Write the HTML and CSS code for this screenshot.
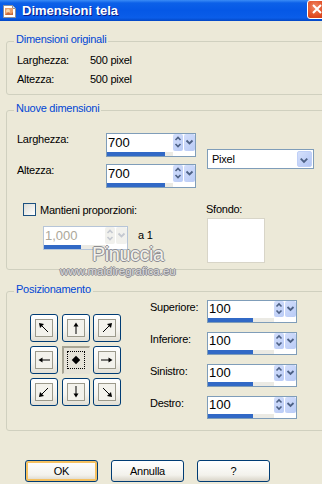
FILE: index.html
```html
<!DOCTYPE html>
<html lang="it">
<head>
    <meta charset="UTF-8">
    <meta name="viewport" content="width=device-width, initial-scale=1.0">
    <title>Dimensioni tela</title>

    <link rel="stylesheet" href="styles.css">
</head>
<body>

<div class="window">
    <!-- Title bar -->
    <div class="titlebar">
        <svg class="app-icon" width="16" height="16" viewBox="0 0 16 16">
            <path d="M1.5 2.5h9l3 3v9h-12z" fill="#fff" stroke="#8a8f9c"/>
            <path d="M10.5 2.5v3h3" fill="#dfe3ea" stroke="#8a8f9c"/>
            <rect x="3" y="5" width="8" height="7" fill="#e9a06a"/>
            <circle cx="6" cy="8" r="2" fill="#f7d7b0"/>
            <path d="M3 12l3-3 3 2 2-2v3z" fill="#c86a3c"/>
        </svg>
        <span class="title">Dimensioni tela</span>
        <div class="close-btn">
            <svg width="21" height="19" viewBox="0 0 21 19">
                <path d="M6 5l8 8M14 5l-8 8" stroke="#fff" stroke-width="2"/>
            </svg>
        </div>
    </div>

    <!-- Original size -->
    <fieldset class="group group-orig">
        <legend>Dimensioni originali</legend>
        <div class="info-row"><span class="info-label">Larghezza:</span><span>500 pixel</span></div>
        <div class="info-row"><span class="info-label">Altezza:</span><span>500 pixel</span></div>
    </fieldset>

    <!-- New size -->
    <fieldset class="group group-new">
        <legend>Nuove dimensioni</legend>
        <div class="size-block">
            <div class="size-fields">
                <div class="field-row">
                    <label class="size-label">Larghezza:</label>
                    <div class="spin">
                        <div class="spin-main">
                            <span class="spin-value">700</span>
                            <span class="spin-updown"><svg width="10" height="16" viewBox="0 0 10 16"><path d="M2.5 6l2.5-2.5 2.5 2.5M2.5 10l2.5 2.5 2.5-2.5" fill="none" stroke="#4d6185" stroke-width="1.6"/></svg></span>
                            <span class="spin-drop"><svg width="11" height="16" viewBox="0 0 11 16"><path d="M2.5 6.5l3 3 3-3" fill="none" stroke="#4d6185" stroke-width="1.8"/></svg></span>
                        </div>
                        <div class="spin-track"><div class="spin-fill" style="width: 88%"></div></div>
                    </div>
                </div>
                <div class="field-row">
                    <label class="size-label">Altezza:</label>
                    <div class="spin">
                        <div class="spin-main">
                            <span class="spin-value">700</span>
                            <span class="spin-updown"><svg width="10" height="16" viewBox="0 0 10 16"><path d="M2.5 6l2.5-2.5 2.5 2.5M2.5 10l2.5 2.5 2.5-2.5" fill="none" stroke="#4d6185" stroke-width="1.6"/></svg></span>
                            <span class="spin-drop"><svg width="11" height="16" viewBox="0 0 11 16"><path d="M2.5 6.5l3 3 3-3" fill="none" stroke="#4d6185" stroke-width="1.8"/></svg></span>
                        </div>
                        <div class="spin-track"><div class="spin-fill" style="width: 88%"></div></div>
                    </div>
                </div>
            </div>
            <div class="combo">
                <span class="combo-text">Pixel</span>
                <span class="combo-drop"><svg width="15" height="16" viewBox="0 0 15 16"><path d="M4 6.5l3.5 3.5 3.5-3.5" fill="none" stroke="#4d6185" stroke-width="2"/></svg></span>
            </div>
        </div>

        <div class="keep-block">
            <div class="keep-left">
                <label class="check-row"><span class="checkbox"></span>Mantieni proporzioni:</label>
                <div class="ratio-row">
                    <div class="spin spin-off">
                        <div class="spin-main">
                            <span class="spin-value">1,000</span>
                            <span class="spin-updown"><svg width="10" height="16" viewBox="0 0 10 16"><path d="M2.5 6l2.5-2.5 2.5 2.5M2.5 10l2.5 2.5 2.5-2.5" fill="none" stroke="#c4c8d0" stroke-width="1.6"/></svg></span>
                            <span class="spin-drop"><svg width="11" height="16" viewBox="0 0 11 16"><path d="M2.5 6.5l3 3 3-3" fill="none" stroke="#c4c8d0" stroke-width="1.8"/></svg></span>
                        </div>
                        <div class="spin-track"><div class="spin-fill" style="width: 61%"></div></div>
                    </div>
                    <span class="ratio-text">a 1</span>
                </div>
            </div>
            <div class="bg-col">
                <span>Sfondo:</span>
                <div class="bg-swatch"></div>
            </div>
        </div>
    </fieldset>

    <!-- Placement -->
    <fieldset class="group group-pos">
        <legend>Posizionamento</legend>
        <div class="pos-block">
            <div class="anchor-grid">
                <div class="anchor"><span class="anchor-frame"><svg width="14" height="14" viewBox="0 0 14 14"><path d="M11 11L4 4" stroke="#000"/><path d="M2 2l5 1-4 4z"/></svg></span></div>
                <div class="anchor"><span class="anchor-frame"><svg width="14" height="14" viewBox="0 0 14 14"><path d="M7 13V4" stroke="#000"/><path d="M7 1.5l2.5 4h-5z"/></svg></span></div>
                <div class="anchor"><span class="anchor-frame"><svg width="14" height="14" viewBox="0 0 14 14"><path d="M3 11l7-7" stroke="#000"/><path d="M12 2l-1 5-4-4z"/></svg></span></div>
                <div class="anchor"><span class="anchor-frame"><svg width="14" height="14" viewBox="0 0 14 14"><path d="M13 7H4" stroke="#000"/><path d="M1.5 7l4-2.5v5z"/></svg></span></div>
                <div class="anchor anchor-on"><span class="anchor-focus"><span class="dot"></span></span></div>
                <div class="anchor"><span class="anchor-frame"><svg width="14" height="14" viewBox="0 0 14 14"><path d="M1 7h9" stroke="#000"/><path d="M12.5 7l-4-2.5v5z"/></svg></span></div>
                <div class="anchor"><span class="anchor-frame"><svg width="14" height="14" viewBox="0 0 14 14"><path d="M11 3l-7 7" stroke="#000"/><path d="M2 12l1-5 4 4z"/></svg></span></div>
                <div class="anchor"><span class="anchor-frame"><svg width="14" height="14" viewBox="0 0 14 14"><path d="M7 1v9" stroke="#000"/><path d="M7 12.5l2.5-4h-5z"/></svg></span></div>
                <div class="anchor"><span class="anchor-frame"><svg width="14" height="14" viewBox="0 0 14 14"><path d="M3 3l7 7" stroke="#000"/><path d="M12 12l-5-1 4-4z"/></svg></span></div>
            </div>

            <div class="margins">
                <div class="field-row">
                    <label class="margin-label">Superiore:</label>
                    <div class="spin spin-sm">
                        <div class="spin-main">
                            <span class="spin-value">100</span>
                            <span class="spin-updown"><svg width="10" height="15" viewBox="0 0 10 15"><path d="M2.5 5.5l2.5-2.5 2.5 2.5M2.5 9.5l2.5 2.5 2.5-2.5" fill="none" stroke="#4d6185" stroke-width="1.6"/></svg></span>
                            <span class="spin-drop"><svg width="11" height="15" viewBox="0 0 11 15"><path d="M2.5 6l3 3 3-3" fill="none" stroke="#4d6185" stroke-width="1.8"/></svg></span>
                        </div>
                        <div class="spin-track"><div class="spin-fill" style="width: 68%"></div></div>
                    </div>
                </div>
                <div class="field-row">
                    <label class="margin-label">Inferiore:</label>
                    <div class="spin spin-sm">
                        <div class="spin-main">
                            <span class="spin-value">100</span>
                            <span class="spin-updown"><svg width="10" height="15" viewBox="0 0 10 15"><path d="M2.5 5.5l2.5-2.5 2.5 2.5M2.5 9.5l2.5 2.5 2.5-2.5" fill="none" stroke="#4d6185" stroke-width="1.6"/></svg></span>
                            <span class="spin-drop"><svg width="11" height="15" viewBox="0 0 11 15"><path d="M2.5 6l3 3 3-3" fill="none" stroke="#4d6185" stroke-width="1.8"/></svg></span>
                        </div>
                        <div class="spin-track"><div class="spin-fill" style="width: 68%"></div></div>
                    </div>
                </div>
                <div class="field-row">
                    <label class="margin-label">Sinistro:</label>
                    <div class="spin spin-sm">
                        <div class="spin-main">
                            <span class="spin-value">100</span>
                            <span class="spin-updown"><svg width="10" height="15" viewBox="0 0 10 15"><path d="M2.5 5.5l2.5-2.5 2.5 2.5M2.5 9.5l2.5 2.5 2.5-2.5" fill="none" stroke="#4d6185" stroke-width="1.6"/></svg></span>
                            <span class="spin-drop"><svg width="11" height="15" viewBox="0 0 11 15"><path d="M2.5 6l3 3 3-3" fill="none" stroke="#4d6185" stroke-width="1.8"/></svg></span>
                        </div>
                        <div class="spin-track"><div class="spin-fill" style="width: 68%"></div></div>
                    </div>
                </div>
                <div class="field-row">
                    <label class="margin-label">Destro:</label>
                    <div class="spin spin-sm">
                        <div class="spin-main">
                            <span class="spin-value">100</span>
                            <span class="spin-updown"><svg width="10" height="15" viewBox="0 0 10 15"><path d="M2.5 5.5l2.5-2.5 2.5 2.5M2.5 9.5l2.5 2.5 2.5-2.5" fill="none" stroke="#4d6185" stroke-width="1.6"/></svg></span>
                            <span class="spin-drop"><svg width="11" height="15" viewBox="0 0 11 15"><path d="M2.5 6l3 3 3-3" fill="none" stroke="#4d6185" stroke-width="1.8"/></svg></span>
                        </div>
                        <div class="spin-track"><div class="spin-fill" style="width: 68%"></div></div>
                    </div>
                </div>
            </div>
        </div>
    </fieldset>

    <!-- Dialog buttons -->
    <div class="actions">
        <button type="button" class="btn btn-default">OK</button>
        <button type="button" class="btn">Annulla</button>
        <button type="button" class="btn">?</button>
    </div>

    <!-- Watermark over the dialog -->
    <div class="watermark-name">Pinuccia</div>
    <div class="watermark-url">www.maidiregrafica.eu</div>
</div>

</body>
</html>
```

FILE: styles.css
```css
body {
    margin: 0;
    background-color: #ece9d8;
    font-family: "Liberation Sans", Arial, sans-serif;
    font-size: 11px;
    letter-spacing: -0.25px;
    color: #000;
}

.window {
    position: relative;
    width: 322px;
    height: 484px;
    overflow: hidden;
    background-color: #ece9d8;
}

/* Title bar */
.titlebar {
    height: 21px;
    display: flex;
    align-items: center;
    overflow: hidden;
    background: linear-gradient(#3a8cf6 0, #0c60e8 3px, #0558e6 50%, #0a5de9 85%, #0246c4 100%);
}

.app-icon {
    margin-left: 2px;
    flex-shrink: 0;
}

.title {
    margin-left: 4px;
    color: #fff;
    font-size: 13px;
    font-weight: bold;
    letter-spacing: 0;
    text-shadow: 1px 1px #0a1a8a;
}

.close-btn {
    margin-left: auto;
    margin-right: -7px;
    align-self: flex-start;
    width: 22px;
    height: 19px;
    box-sizing: border-box;
    border: 1px solid #fff;
    border-radius: 3px;
    background: radial-gradient(circle at 35% 35%, #f08a66, #e04b22 55%, #c3340f);
}

.close-btn svg {
    display: block;
    margin: -1px 0 0 -1px;
}

/* Group boxes */
.group {
    margin: 12px -10px 0 6px;
    padding: 0 0 0 10px;
    border: 1px solid #d0d0bf;
    border-radius: 3px;
    min-width: 0;
}

.group legend {
    margin-left: -3px;
    padding: 0 2px 4px;
    color: #0046d5;
    line-height: 13px;
}

.group-orig {
    padding-top: 1px;
    padding-bottom: 5px;
}

.info-row {
    display: flex;
    height: 19px;
    line-height: 19px;
}

.info-label {
    width: 73px;
}

.group-new {
    margin-top: 7px;
    padding-top: 14px;
    padding-bottom: 6px;
}

.size-block {
    display: flex;
    align-items: flex-start;
}

.size-fields {
    display: flex;
    flex-direction: column;
    gap: 7px;
}

.field-row {
    display: flex;
    align-items: flex-start;
}

.size-label {
    width: 89px;
    line-height: 13px;
}

/* Spinner with slider bar */
.spin {
    width: 90px;
    height: 24px;
    box-sizing: border-box;
    border: 1px solid #7f9db9;
    background-color: #fff;
    display: flex;
    flex-direction: column;
}

.spin-main {
    display: flex;
    height: 17px;
}

.spin-value {
    flex: 1;
    padding-left: 1px;
    font-size: 13px;
    line-height: 17px;
    letter-spacing: 0;
}

.spin-updown,
.spin-drop {
    display: flex;
    background: linear-gradient(135deg, #d3defb, #b9cbf6);
    border-radius: 2px;
}

.spin-updown {
    width: 10px;
}

.spin-drop {
    width: 11px;
    margin-left: 1px;
}

.spin-track {
    width: 66px;
    height: 4px;
    margin-top: 1px;
    background-color: #ebeae4;
}

.spin-fill {
    height: 100%;
    background-color: #3169c6;
}

.spin-sm {
    height: 23px;
}

.spin-sm .spin-main {
    height: 16px;
}

.spin-sm .spin-value {
    line-height: 16px;
}

.spin-off {
    width: 85px;
    border-color: #b6c5d8;
}

.spin-off .spin-value {
    color: #aca899;
}

.spin-off .spin-updown,
.spin-off .spin-drop {
    background: #f1f1ed;
}

.spin-off .spin-track {
    width: 61px;
}

/* Combo box */
.combo {
    margin: 16px 0 0 11px;
    width: 107px;
    height: 20px;
    box-sizing: border-box;
    border: 1px solid #7f9db9;
    background-color: #fff;
    display: flex;
    padding: 1px;
}

.combo-text {
    flex: 1;
    padding-left: 3px;
    line-height: 16px;
}

.combo-drop {
    width: 15px;
    display: flex;
    background: linear-gradient(135deg, #d5e0fb, #b3c6f5);
    border: 1px solid #c0d0f7;
    border-radius: 2px;
    box-sizing: border-box;
}

.combo-drop svg {
    margin-left: -1px;
}

/* Keep ratio + background */
.keep-block {
    display: flex;
    margin-top: 15px;
}

.keep-left {
    width: 189px;
}

.check-row {
    display: flex;
    align-items: center;
    height: 13px;
}

.checkbox {
    width: 13px;
    height: 13px;
    box-sizing: border-box;
    margin: 0 4px 0 6px;
    border: 1px solid #1c5180;
    background: linear-gradient(135deg, #dcdcd5, #fff);
}

.ratio-row {
    display: flex;
    align-items: flex-start;
    margin: 10px 0 0 26px;
}

.ratio-text {
    margin: 3px 0 0 10px;
    line-height: 13px;
}

.bg-col {
    display: flex;
    flex-direction: column;
}

.bg-col span {
    line-height: 13px;
}

.bg-swatch {
    margin: 2px 0 0 1px;
    width: 58px;
    height: 45px;
    box-sizing: border-box;
    border: 1px solid #d8d5c8;
    background-color: #fff;
}

/* Placement */
.group-pos {
    margin-top: 13px;
    padding-bottom: 11px;
}

.pos-block {
    display: flex;
    align-items: center;
}

.anchor-grid {
    margin-left: 13px;
    display: grid;
    grid-template-columns: repeat(3, 28px);
    grid-auto-rows: 28px;
    gap: 4px 3.5px;
}

.anchor {
    box-sizing: border-box;
    border: 1px solid #003c74;
    border-radius: 3px;
    background: linear-gradient(#fff, #f4f3ee 60%, #e2dfd4);
    display: flex;
    align-items: center;
    justify-content: center;
}

.anchor-frame {
    width: 18px;
    height: 18px;
    box-sizing: border-box;
    border: 1px solid #9c9a8c;
    background-color: #f3f2ec;
    display: flex;
    align-items: center;
    justify-content: center;
}

.anchor-on {
    border: 1px solid transparent;
    border-top: 2px solid #a8a594;
    border-left: 2px solid #a8a594;
    border-radius: 0;
    background: #e6e3d8;
}

.anchor-focus {
    width: 18px;
    height: 18px;
    box-sizing: border-box;
    border: 1px dotted #000;
    display: flex;
    align-items: center;
    justify-content: center;
}

.dot {
    width: 6px;
    height: 6px;
    background-color: #000;
    transform: rotate(45deg);
}

.margins {
    margin-left: 29px;
    display: flex;
    flex-direction: column;
    gap: 9px;
}

.margin-label {
    width: 57px;
    margin-top: 1px;
    line-height: 13px;
}

/* Bottom buttons */
.actions {
    display: flex;
    gap: 13px;
    margin-top: 29px;
    padding-left: 25px;
}

.btn {
    width: 73px;
    height: 22px;
    padding: 0;
    border: 1px solid #003c74;
    border-radius: 3px;
    background: linear-gradient(#fff, #f3f2ec 70%, #d9d4c8);
    font-family: "Liberation Sans", Arial, sans-serif;
    font-size: 11px;
    letter-spacing: -0.25px;
    color: #000;
}

.btn-default {
    box-shadow: inset 0 0 0 2px #f5c161;
}

/* Watermark */
.watermark-name,
.watermark-url {
    position: absolute;
    color: #f2f1ec;
    text-shadow: -1px 0 #8d8d92, 1px 0 #8d8d92, 0 -1px #8d8d92, 0 1px #8d8d92;
}

.watermark-name {
    left: 92px;
    top: 244px;
    font-size: 20px;
    line-height: 20px;
    letter-spacing: -0.5px;
}

.watermark-url {
    left: 60px;
    top: 265px;
    font-size: 11.5px;
    line-height: 13px;
    letter-spacing: 0;
    color: #d9d9dc;
}
```
